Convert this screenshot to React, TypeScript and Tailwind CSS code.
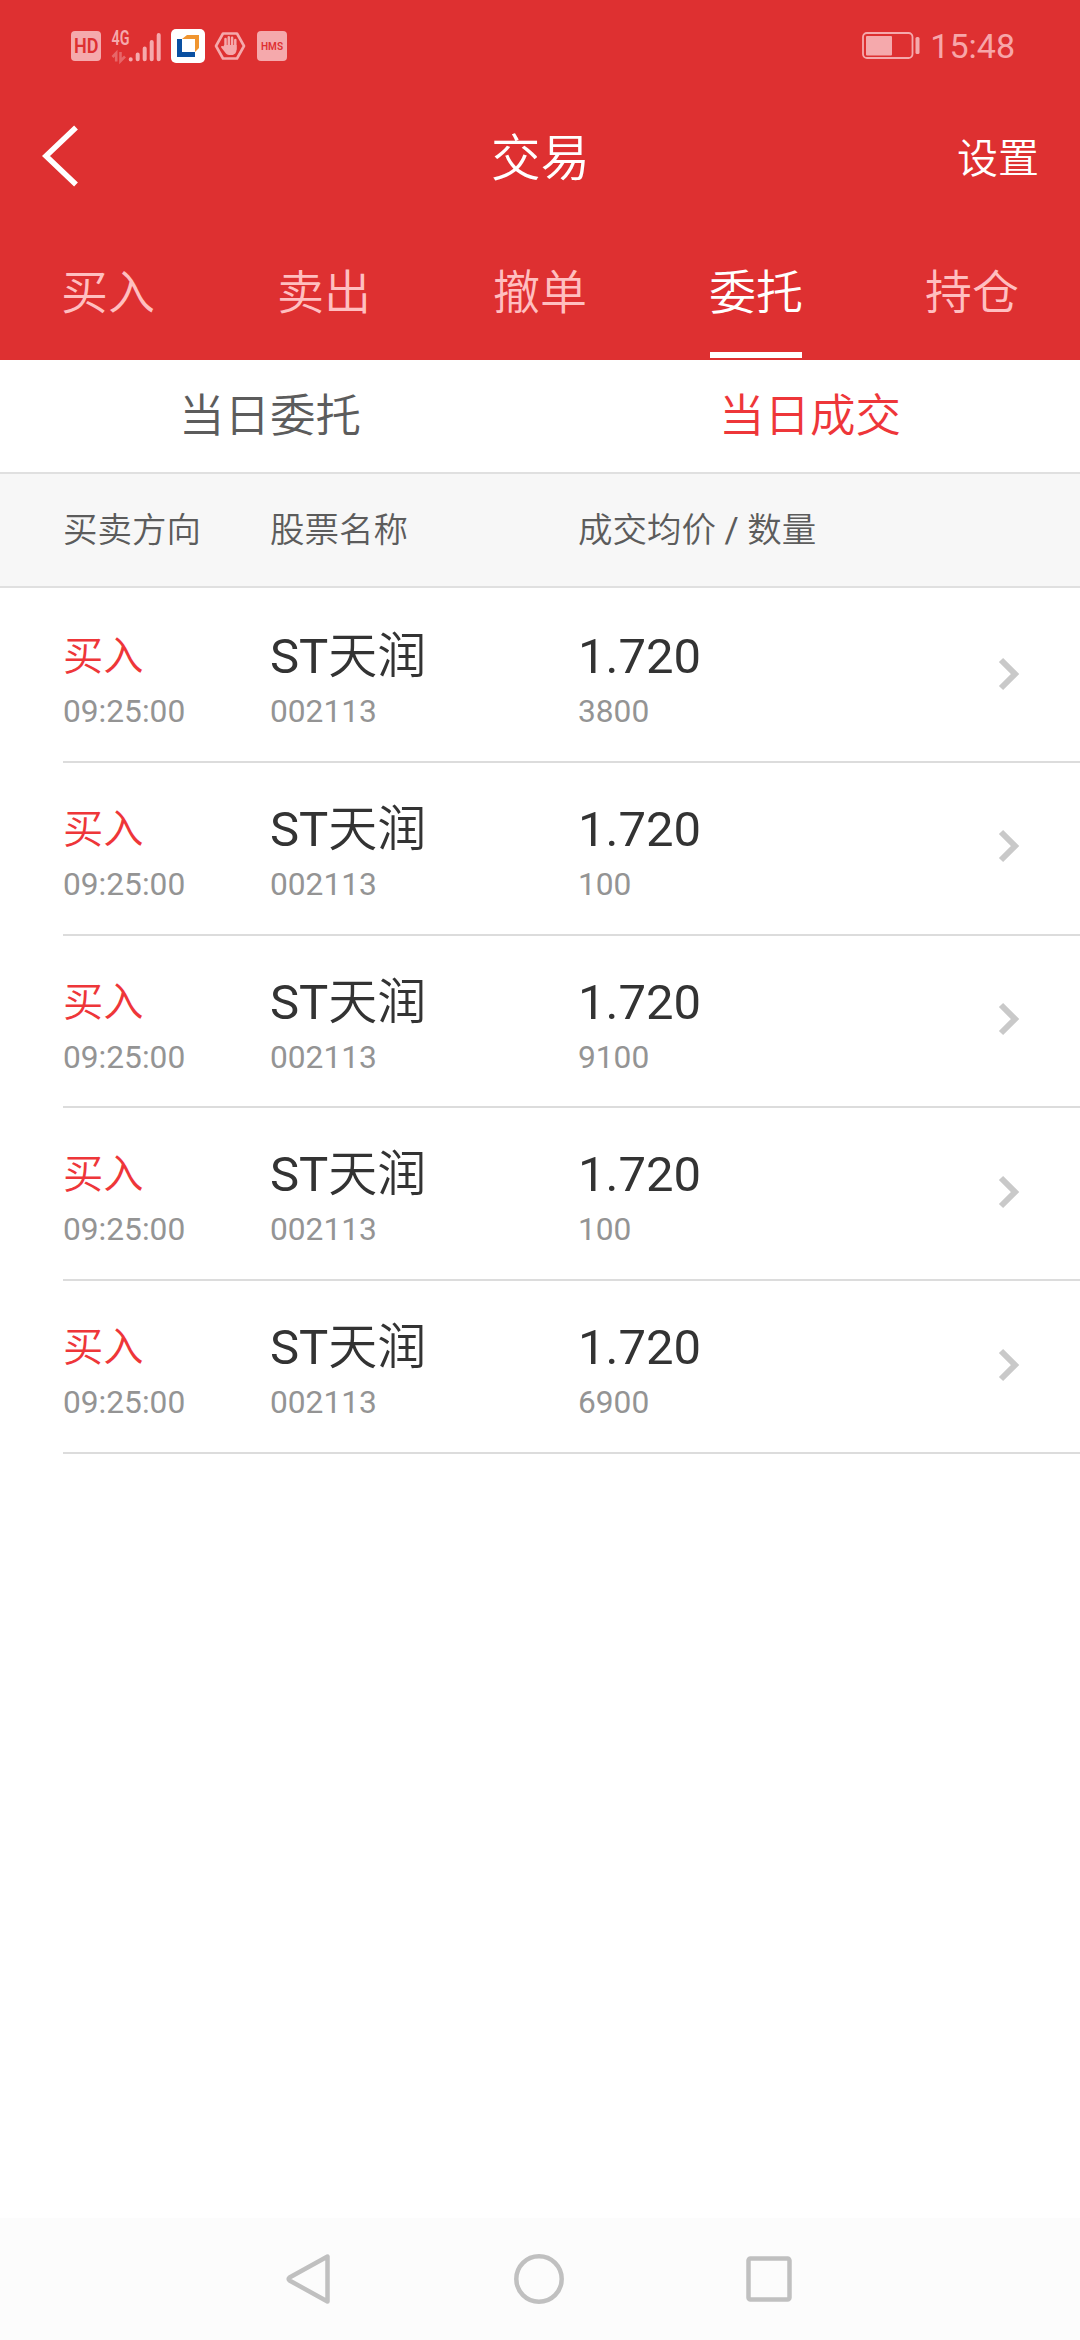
import clsx from 'clsx'

interface Deal {
  id: number
  side: string
  time: string
  flag: string
  name: string
  code: string
  price: string
  amount: number
}

const TABS = ['买入', '卖出', '撤单', '委托', '持仓']
const SUB_TABS = ['当日委托', '当日成交']

const DEALS: Deal[] = [3800, 100, 9100, 100, 6900].map((amount, i) => ({
  id: i,
  side: '买入',
  time: '09:25:00',
  flag: 'ST',
  name: '天润',
  code: '002113',
  price: '1.720',
  amount,
}))

function StatusBar() {
  return (
    <div className="flex h-[92px] items-center justify-between pl-[71px] pr-[65px] text-[#f7a6a9]">
      <div className="flex items-center">
        <svg width="30" height="30" viewBox="0 0 30 30">
          <rect width="30" height="30" rx="4" fill="#f5a9ac" />
          <text x="3" y="22" textLength="24.5" lengthAdjust="spacingAndGlyphs" fontSize="20" fontWeight="600" fill="#de3031">HD</text>
        </svg>

        {/* 4G + signal */}
        <svg className="ml-2.5 overflow-visible" width="52" height="34" viewBox="0 0 52 34">
          <text x="0.5" y="16" textLength="18" lengthAdjust="spacingAndGlyphs" fontSize="20" fontWeight="600" fill="#f5a9ac">4G</text>
          <path d="M5.200 32.500V24L1.500 28M9.500 23v9l4.500-4.500" fill="none" stroke="#e76668" strokeWidth="2.600" />
          <path d="M19.700 30.300v.1M26.700 25.500v4.800M33.700 19.500v10.800M40.700 13v17.300M47.700 6v24.300" stroke="#f5a9ac" strokeWidth="4" strokeLinecap="round" />
        </svg>

        {/* broker app */}
        <svg className="ml-2" width="34" height="34" viewBox="0 0 34 34">
          <rect width="34" height="34" rx="5" fill="#fff" />
          <path d="M6 10h5v13h13v5H6z" fill="#0a50a1" />
          <path d="M11 10l5-4h12v13l-4 4V10z" fill="#f0952f" />
        </svg>

        {/* blocker hand */}
        <svg className="ml-2" width="34" height="30" viewBox="0 0 34 30">
          <path d="M10 2.500h14L31 15l-7 12.500H10L3 15z" fill="none" stroke="#f5a9ac" strokeWidth="2.600" strokeLinejoin="round" />
          <path d="M12.500 8v10M15.800 6.200V17M19.100 6.700V17M22.300 9v9" fill="none" stroke="#f5a9ac" strokeWidth="2.500" strokeLinecap="round" />
          <path d="M11.300 14h12.250v4.500c0 3-1.800 5.500-4.800 5.500h-2.500c-2 0-3.200-1-4.500-3l-3.500-4.500c-.6-1.200.6-2 1.900-1z" fill="#f5a9ac" />
        </svg>

        <svg className="ml-[10px]" width="30" height="30" viewBox="0 0 30 30">
          <rect width="30" height="30" rx="4" fill="#f5a9ac" />
          <text x="4" y="18.500" textLength="22" lengthAdjust="spacingAndGlyphs" fontSize="10" fontWeight="600" fill="#de3031">HMS</text>
        </svg>
      </div>

      <div className="flex items-center">
        <svg width="58" height="28" viewBox="0 0 58 28">
          <rect x="1" y="1" width="49.500" height="25" rx="4" fill="none" stroke="#f5a9ac" strokeWidth="1.800" />
          <rect x="4" y="4" width="26" height="19.500" rx="1" fill="#f5a9ac" />
          <rect x="53.500" y="5" width="4" height="17" rx="1.500" fill="#f5a9ac" />
        </svg>
        <span className="ml-[10px] text-[34px] leading-none">15:48</span>
      </div>
    </div>
  )
}

function Header() {
  return (
    <header className="h-[360px] bg-[#de3031]">
      <StatusBar />
      <div className="grid h-[132px] grid-cols-3 items-center pl-[42px] pr-[41px] font-[350] text-white">
        <svg className="-mt-1 -ml-px" width="38" height="62" viewBox="0 0 38 62" fill="none" stroke="currentColor" strokeWidth="5.500">
          <path d="M35 2.500L5 31l30 28.500" />
        </svg>
        <h1 className="pt-1 text-center text-[49.500px] leading-none font-[350]">交易</h1>
        <span className="pt-0.5 text-right text-[41px] leading-none">设置</span>
      </div>
      <nav className="grid h-[136px] grid-cols-5 font-[350]">
        {TABS.map((tab) => (
          <div
            key={tab}
            className={clsx('flex flex-col items-center text-[47px]', tab === '委托' ? 'text-white' : 'text-[#ffbfc0]')}
          >
            <span className="pt-[45px] leading-none">{tab}</span>
            {tab === '委托' && <div className="mt-auto mb-0.5 h-1.5 w-[92px] bg-white" />}
          </div>
        ))}
      </nav>
    </header>
  )
}

function DealRow({ deal }: { deal: Deal }) {
  return (
    <li className="ml-[63px] flex h-[172.800px] border-b-2 border-[#dcdcdc]">
      <div className="w-[207px]">
        <div className="flex h-[98px] items-end text-[40.300px] leading-[62px] font-[350] text-[#ee3639]">{deal.side}</div>
        <div className="text-[31.700px] leading-[48px] text-[#949494]">{deal.time}</div>
      </div>
      <div className="w-[308px]">
        <div className="flex h-[98px] items-end text-[49px] leading-[62px] text-[#333333]">
          {deal.flag}<span className="font-[350]">{deal.name}</span>
        </div>
        <div className="text-[31.700px] leading-[48px] text-[#949494]">{deal.code}</div>
      </div>
      <div className="flex-1">
        <div className="flex h-[98px] items-end text-[49px] leading-[62px] text-[#333333]">{deal.price}</div>
        <div className="text-[31.700px] leading-[48px] text-[#949494]">{deal.amount}</div>
      </div>
      <svg className="mt-[66.500px] mr-[60px]" width="22" height="34" viewBox="0 0 22 34" fill="none" stroke="#c9c9c9" strokeWidth="6">
        <path d="M3 3l14 14L3 31" />
      </svg>
    </li>
  )
}

export default function App() {
  return (
    <div className="flex h-[2340px] w-[1080px] flex-col overflow-hidden bg-white font-['Roboto','Noto_Sans_CJK_SC',sans-serif]">
      <Header />

      <div className="grid h-[114px] grid-cols-2 border-b-2 border-[#e0e0e0] pt-[3px] text-center text-[45.500px] leading-[108px] font-[350]">
        {SUB_TABS.map((tab) => (
          <span key={tab} className={tab === '当日成交' ? 'text-[#ee3639]' : 'text-[#5c5c5c]'}>{tab}</span>
        ))}
      </div>

      <div className="flex h-[114px] border-b-2 border-[#e0e0e0] bg-[#f7f7f7] pl-[63px] text-[34.500px] leading-[112px] font-[350] text-[#5c5c5c]">
        <span className="w-[207px]">买卖方向</span>
        <span className="w-[308px]">股票名称</span>
        <span>成交均价<span className="font-normal"> / </span>数量</span>
      </div>

      <ul className="flex-1 pt-[2px]">
        {DEALS.map((deal) => <DealRow key={deal.id} deal={deal} />)}
      </ul>

      {/* Android navigation keys */}
      <footer className="flex h-[122px] items-center justify-between bg-[#fcfcfc] pl-[286px] pr-[287px]">
        <svg width="46" height="52" viewBox="0 0 46 52" fill="none" stroke="#c0c0c0" strokeWidth="4.500" strokeLinejoin="round">
          <path d="M41.500 3.500v45L3.500 27.500q-1.500-1.500 0-3z" />
        </svg>
        <svg width="52" height="52" viewBox="0 0 52 52" fill="none" stroke="#c0c0c0" strokeWidth="4.500">
          <circle cx="26" cy="26" r="22.700" />
        </svg>
        <svg width="48" height="48" viewBox="0 0 48 48" fill="none" stroke="#c0c0c0" strokeWidth="4.500">
          <rect x="3.500" y="3.500" width="41" height="41" rx="2" />
        </svg>
      </footer>
    </div>
  )
}
